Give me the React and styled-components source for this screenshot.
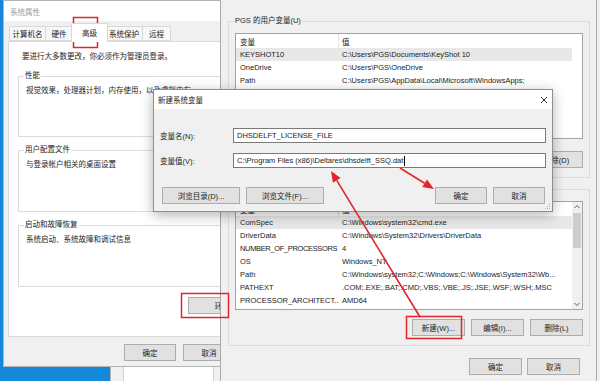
import React from "react";
import styled, { createGlobalStyle } from "styled-components";

const GlobalStyle = createGlobalStyle`
  html, body {
    margin: 0;
    padding: 0;
  }
  body {
    font-family: "Liberation Sans", "Noto Sans CJK SC", sans-serif;
    font-size: 7.5px;
    color: #1c1c1c;
    background: #1688da;
  }
  * {
    box-sizing: border-box;
  }
`;

const Desktop = styled.div`
  position: relative;
  width: 600px;
  height: 381px;
  overflow: hidden;
  background: #1688da;
`;

// windows on the desktop are placed by their coordinates
const Window = styled.div`
  position: absolute;
  left: ${(p) => p.$x}px;
  top: ${(p) => p.$y}px;
  width: ${(p) => p.$w}px;
  height: ${(p) => p.$h}px;
  display: flex;
  flex-direction: column;
  background: #f0f0f0;
  border: 1px solid ${(p) => p.$border || "#b4b4b4"};
  box-shadow: ${(p) => (p.$shadow ? "0 3px 12px rgba(0, 0, 0, 0.3)" : "none")};
`;

const TitleBar = styled.div`
  flex-shrink: 0;
  height: ${(p) => p.$h}px;
  display: flex;
  align-items: center;
  justify-content: space-between;
  padding: 0 3px 0 ${(p) => p.$pl}px;
  background: #ffffff;
  color: ${(p) => (p.$active ? "#1c1c1c" : "#9a9a9a")};
`;

const CloseIcon = styled.svg`
  width: 10px;
  height: 10px;
  stroke: #333;
  stroke-width: 1;
`;

const Body = styled.div`
  display: flex;
  flex-direction: column;
  padding: ${(p) => p.$pad};
`;

const TabStrip = styled.div`
  height: 20px;
  display: flex;
  align-items: flex-end;
  padding-left: 1px;
`;

const Tab = styled.div`
  position: relative;
  width: ${(p) => p.$w}px;
  height: ${(p) => (p.$selected ? 19 : 15)}px;
  margin: ${(p) => (p.$selected ? "0 -2px -1px" : "0")};
  z-index: ${(p) => (p.$selected ? 1 : 0)};
  display: flex;
  align-items: center;
  justify-content: center;
  background: ${(p) => (p.$selected ? "#ffffff" : "#f7f7f7")};
  border: 1px solid #d9d9d9;
  border-bottom: ${(p) => (p.$selected ? "none" : "1px solid #d9d9d9")};
  border-left-width: ${(p) => (p.$first || p.$selected ? 1 : 0)}px;
  padding-bottom: ${(p) => (p.$selected ? 2 : 0)}px;
`;

const Panel = styled.div`
  height: 296px;
  display: flex;
  flex-direction: column;
  padding: 0 9px;
  background: #ffffff;
  border: 1px solid #d9d9d9;
`;

const Notice = styled.div`
  margin: 10px 0 0 4px;
  line-height: 10px;
`;

const GroupBox = styled.div`
  position: relative;
  flex-shrink: 0;
  height: ${(p) => p.$h}px;
  margin: ${(p) => p.$m};
  padding: ${(p) => p.$pad};
  border: 1px solid #dcdcdc;
  display: flex;
  flex-direction: column;
`;

// the caption sits on the group's top border
const Legend = styled.span`
  position: absolute;
  top: -6px;
  left: 5px;
  padding: 0 1px;
  line-height: 10px;
  background: ${(p) => p.$bg};
`;

const GroupText = styled.div`
  line-height: 10px;
  white-space: nowrap;
`;

const ButtonRow = styled.div`
  display: flex;
  justify-content: ${(p) => p.$justify || "flex-end"};
  gap: ${(p) => p.$gap}px;
  margin: ${(p) => p.$m};
`;

const Button = styled.div`
  flex-shrink: 0;
  width: ${(p) => p.$w}px;
  height: 17px;
  display: flex;
  align-items: center;
  justify-content: center;
  background: #e1e1e1;
  border: 1px solid #adadad;
  white-space: nowrap;
`;

const List = styled.div`
  height: ${(p) => p.$h}px;
  display: flex;
  background: #ffffff;
  border: 1px solid #a3a3a3;
  overflow: hidden;
`;

const Rows = styled.div`
  flex: 1;
  display: flex;
  flex-direction: column;
`;

const Row = styled.div`
  width: 336px;
  height: ${(p) => (p.$header ? 14 : 13)}px;
  flex-shrink: 0;
  display: grid;
  grid-template-columns: 103px 1fr;
  align-items: center;
  background: ${(p) => (p.$selected ? "#e8e8e8" : "transparent")};
  white-space: nowrap;
`;

const Cell = styled.div`
  padding-left: ${(p) => (p.$first ? 4 : 3)}px;
  overflow: hidden;
  height: 100%;
  display: flex;
  align-items: center;
  letter-spacing: ${(p) => (p.$tight ? "-0.35px" : "normal")};
  border-right: ${(p) => (p.$divider ? "1px solid #e5e5e5" : "none")};
`;

const ScrollBar = styled.div`
  width: 10px;
  display: flex;
  flex-direction: column;
  background: #f0f0f0;
`;

const ScrollArrow = styled.svg`
  width: 10px;
  height: 10px;
  flex-shrink: 0;
  fill: none;
  stroke: #606060;
  stroke-width: 1;
`;

const ScrollTrack = styled.div`
  flex: 1;
  padding: 1px 1px;
`;

const Thumb = styled.div`
  width: 8px;
  height: 35px;
  background: #cdcdcd;
`;

const FieldRow = styled.div`
  display: flex;
  align-items: center;
  margin-top: ${(p) => p.$mt}px;
`;

const FieldLabel = styled.div`
  width: 73px;
  flex-shrink: 0;
`;

const Input = styled.div`
  flex: 1;
  height: 15px;
  display: flex;
  align-items: center;
  padding-left: 3px;
  background: #ffffff;
  border: 1px solid #7a7a7a;
  white-space: nowrap;
`;

const Caret = styled.span`
  display: inline-block;
  width: 1px;
  height: 10px;
  margin-left: 1px;
  background: #000;
`;

const Spacer = styled.div`
  flex: 1;
`;

const Grip = styled.svg`
  position: absolute;
  right: 1px;
  bottom: 1px;
  width: 8px;
  height: 8px;
  fill: #b0b0b0;
`;

const BackPanel = styled.div`
  flex: 1;
  margin: 12px 10px 0 12px;
  background: #ffffff;
  border: 1px solid #d0d0d0;
`;

const Annotations = styled.svg`
  position: absolute;
  left: 0;
  top: 0;
  width: 600px;
  height: 381px;
  pointer-events: none;
  stroke: #e0262a;
  fill: none;
`;

const userVars = [
  { name: "KEYSHOT10", value: "C:\\Users\\PGS\\Documents\\KeyShot 10", selected: true },
  { name: "OneDrive", value: "C:\\Users\\PGS\\OneDrive" },
  { name: "Path", value: "C:\\Users\\PGS\\AppData\\Local\\Microsoft\\WindowsApps;" },
];

const systemVars = [
  { name: "ComSpec", value: "C:\\Windows\\system32\\cmd.exe", selected: true },
  { name: "DriverData", value: "C:\\Windows\\System32\\Drivers\\DriverData" },
  { name: "NUMBER_OF_PROCESSORS", value: "4", tight: true },
  { name: "OS", value: "Windows_NT" },
  { name: "Path", value: "C:\\Windows\\system32;C:\\Windows;C:\\Windows\\System32\\Wb..." },
  { name: "PATHEXT", value: ".COM;.EXE;.BAT;.CMD;.VBS;.VBE;.JS;.JSE;.WSF;.WSH;.MSC" },
  { name: "PROCESSOR_ARCHITECT...", value: "AMD64" },
];

function VarList({ height, vars, scroll }) {
  return (
    <List $h={height}>
      <Rows>
        <Row $header>
          <Cell $first $divider>变量</Cell>
          <Cell>值</Cell>
        </Row>
        {vars.map((v) => (
          <Row key={v.name + v.value} $selected={v.selected}>
            <Cell $first $tight={v.tight}>{v.name}</Cell>
            <Cell>{v.value}</Cell>
          </Row>
        ))}
      </Rows>
      {scroll && (
        <ScrollBar>
          <ScrollArrow viewBox="0 0 10 10">
            <path d="M2.5 6 L5 3.5 L7.5 6" />
          </ScrollArrow>
          <ScrollTrack>
            <Thumb />
          </ScrollTrack>
          <ScrollArrow viewBox="0 0 10 10">
            <path d="M2.5 4 L5 6.5 L7.5 4" />
          </ScrollArrow>
        </ScrollBar>
      )}
    </List>
  );
}

function Arrow({ x1, y1, x2, y2 }) {
  const len = Math.hypot(x2 - x1, y2 - y1);
  const ux = (x2 - x1) / len;
  const uy = (y2 - y1) / len;
  const bx = x2 - ux * 11;
  const by = y2 - uy * 11;
  const nx = -uy * 4.5;
  const ny = ux * 4.5;
  return (
    <g>
      <line x1={x1} y1={y1} x2={bx} y2={by} strokeWidth="1.6" />
      <polygon
        points={`${x2},${y2} ${bx + nx},${by + ny} ${bx - nx},${by - ny}`}
        fill="#e0262a"
        stroke="none"
      />
    </g>
  );
}

export default function App() {
  return (
    <>
      <GlobalStyle />
      <Desktop>
        <Window $x={110} $y={300} $w={115} $h={100}>
          <BackPanel />
        </Window>
        <Window $x={590} $y={-1} $w={30} $h={383} $border="#9a9a9a" />

        {/* 系统属性 */}
        <Window $x={3} $y={0} $w={300} $h={367}>
          <TitleBar $h={20} $pl={6}>
            系统属性
          </TitleBar>
          <Body $pad="0 4px">
            <TabStrip>
              <Tab $w={37} $first>计算机名</Tab>
              <Tab $w={27}>硬件</Tab>
              <Tab $w={37} $selected>高级</Tab>
              <Tab $w={37}>系统保护</Tab>
              <Tab $w={28}>远程</Tab>
            </TabStrip>
            <Panel>
              <Notice>要进行大多数更改，你必须作为管理员登录。</Notice>
              <GroupBox $h={61} $m="14px 0 0 0" $pad="9px 0 0 7px">
                <Legend $bg="#fff">性能</Legend>
                <GroupText>视觉效果，处理器计划，内存使用，以及虚拟内存</GroupText>
              </GroupBox>
              <GroupBox $h={62} $m="13px 0 0 0" $pad="9px 0 0 7px">
                <Legend $bg="#fff">用户配置文件</Legend>
                <GroupText>与登录帐户相关的桌面设置</GroupText>
              </GroupBox>
              <GroupBox $h={62} $m="13px 0 0 0" $pad="9px 0 0 7px">
                <Legend $bg="#fff">启动和故障恢复</Legend>
                <GroupText>系统启动、系统故障和调试信息</GroupText>
              </GroupBox>
              <ButtonRow $m="10px 0 0 0" $gap={0}>
                <Button $w={100}>环境变量(N)...</Button>
              </ButtonRow>
            </Panel>
            <ButtonRow $m="7px 4px 0 0" $gap={7}>
              <Button $w={52}>确定</Button>
              <Button $w={52}>取消</Button>
              <Button $w={52}>应用(A)</Button>
            </ButtonRow>
          </Body>
        </Window>

        {/* 环境变量 */}
        <Window $x={220} $y={-1} $w={377} $h={383} $border="#a8a8a8">
          <Body $pad="0 6px 0 7px">
            <GroupBox $h={157} $m="21px 0 0 0" $pad="11px 6px 0 6px">
              <Legend $bg="#f0f0f0">PGS 的用户变量(U)</Legend>
              <VarList height={106} vars={userVars} />
              <ButtonRow $m="12px 0 0 0" $gap={6}>
                <Button $w={53}>新建(N)...</Button>
                <Button $w={53}>编辑(E)...</Button>
                <Button $w={53}>删除(D)</Button>
              </ButtonRow>
            </GroupBox>
            <GroupBox $h={157} $m="11px 0 0 0" $pad="11px 6px 0 6px">
              <Legend $bg="#f0f0f0">系统变量(S)</Legend>
              <VarList height={109} vars={systemVars} scroll />
              <ButtonRow $m="9px 0 0 0" $gap={6}>
                <Button $w={53}>新建(W)...</Button>
                <Button $w={53}>编辑(I)...</Button>
                <Button $w={53}>删除(L)</Button>
              </ButtonRow>
            </GroupBox>
            <ButtonRow $m="12px 10px 0 0" $gap={5}>
              <Button $w={53}>确定</Button>
              <Button $w={53}>取消</Button>
            </ButtonRow>
          </Body>
        </Window>

        {/* 新建系统变量 */}
        <Window $x={153} $y={89} $w={400} $h={123} $border="#8e8e8e" $shadow>
          <TitleBar $h={19} $pl={4} $active>
            新建系统变量
            <CloseIcon viewBox="0 0 10 10">
              <path d="M2 2 L8 8 M8 2 L2 8" />
            </CloseIcon>
          </TitleBar>
          <Body $pad="0 6px">
            <FieldRow $mt={19}>
              <FieldLabel>变量名(N):</FieldLabel>
              <Input>DHSDELFT_LICENSE_FILE</Input>
            </FieldRow>
            <FieldRow $mt={10}>
              <FieldLabel>变量值(V):</FieldLabel>
              <Input>
                C:\Program Files (x86)\Deltares\dhsdelft_SSQ.dat
                <Caret />
              </Input>
            </FieldRow>
            <ButtonRow $m="19px 1px 0 2px" $gap={6} $justify="flex-start">
              <Button $w={78}>浏览目录(D)...</Button>
              <Button $w={78}>浏览文件(F)...</Button>
              <Spacer />
              <Button $w={52}>确定</Button>
              <Button $w={52}>取消</Button>
            </ButtonRow>
          </Body>
          <Grip viewBox="0 0 8 8">
            <rect x="6" y="2" width="1" height="1" />
            <rect x="4" y="4" width="1" height="1" />
            <rect x="6" y="4" width="1" height="1" />
            <rect x="2" y="6" width="1" height="1" />
            <rect x="4" y="6" width="1" height="1" />
            <rect x="6" y="6" width="1" height="1" />
          </Grip>
        </Window>

        <Annotations viewBox="0 0 600 381">
          <rect x="73.5" y="17.5" width="24" height="30" strokeWidth="1.5" />
          <rect x="181.5" y="293.5" width="47" height="24" strokeWidth="1.5" />
          <rect x="406.5" y="316.5" width="55" height="22" strokeWidth="1.5" />
          <Arrow x1={420} y1={317} x2={331} y2={171} />
          <Arrow x1={400} y1={168} x2={434} y2={189} />
        </Annotations>
      </Desktop>
    </>
  );
}
